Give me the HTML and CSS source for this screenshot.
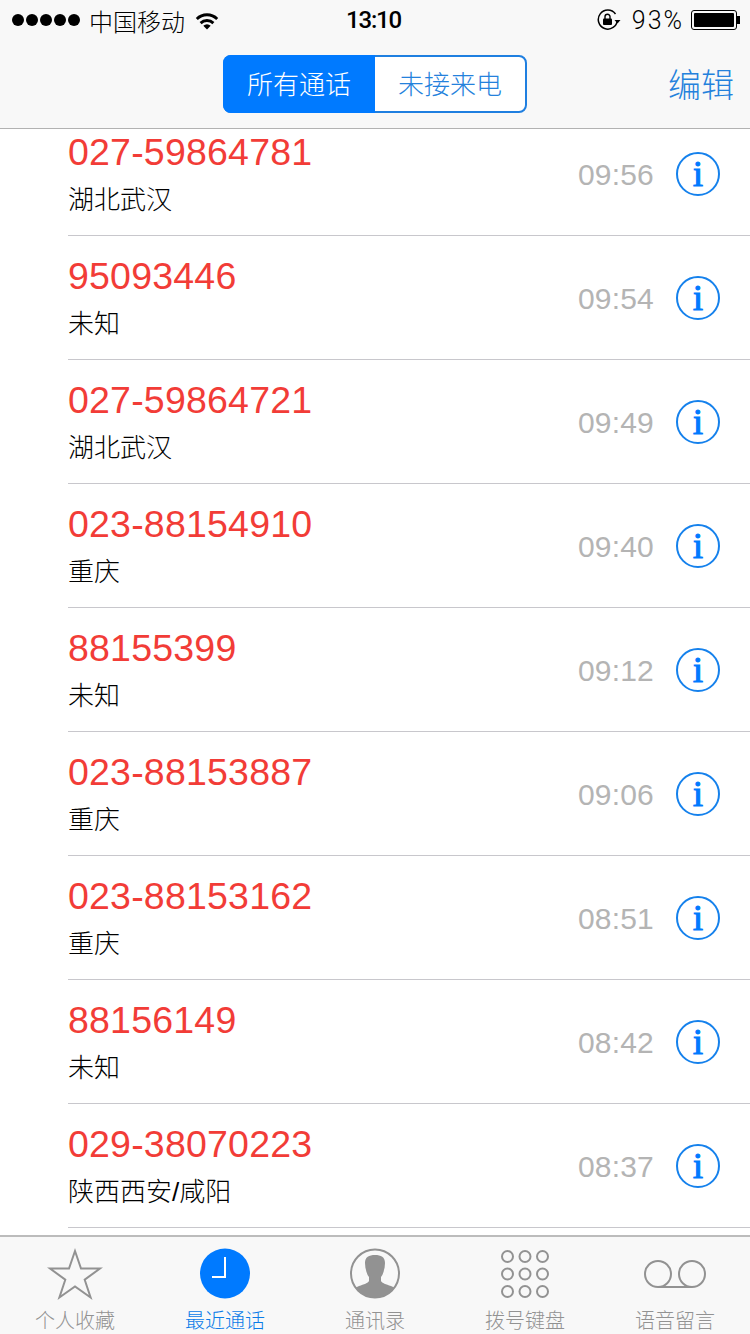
FILE: index.html
```html
<!DOCTYPE html>
<html lang="zh-CN">

<head>
    <title>最近通话</title>
    <meta charset="UTF-8" />
    <meta name="viewport" content="width=device-width, initial-scale=1.0" />
    <link rel="stylesheet" href="styles.css">
</head>

<body>
    <header class="top">
        <div class="status">
            <div class="status-left">
                <span class="signal"><i></i><i></i><i></i><i></i><i></i></span>
                <span class="carrier">中国移动</span>
                <svg class="wifi" width="24" height="19" viewBox="0 0 24 19">
                    <path d="M.8 6.900a16 16 0 0 1 22.400 0l-2 2.200a13 13 0 0 0-18.400 0z" fill="#000" />
                    <path d="M4.600 11a10.500 10.500 0 0 1 14.800 0l-2 2.200a7.600 7.600 0 0 0-10.800 0z" fill="#000" />
                    <path d="M12 18.500 8.300 14.800a5.300 5.300 0 0 1 7.400 0z" fill="#000" />
                </svg>
            </div>
            <div class="clock">13:10</div>
            <div class="status-right">
                <svg class="lock" width="24" height="22" viewBox="0 0 24 22">
                    <path d="M18.500 5A9.500 9.500 0 1 0 20.300 11" fill="none" stroke="#000" stroke-width="1.500" />
                    <path d="M17.500 11h6l-3 3.500z" fill="#000" />
                    <rect x="6" y="9.500" width="9" height="6.500" rx="1" fill="#000" />
                    <path d="M8 10V7.800a2.500 2.500 0 0 1 5 0V10" fill="none" stroke="#000" stroke-width="1.400" />
                </svg>
                <span class="percent">93%</span>
                <span class="battery"><span class="battery-fill"></span></span>
            </div>
        </div>
        <nav class="nav">
            <div class="segments">
                <span class="segment active">所有通话</span>
                <span class="segment">未接来电</span>
            </div>
            <span class="edit">编辑</span>
        </nav>
    </header>

    <main class="calls">
        <ul class="call-list">
            <li class="call">
                <div class="call-body">
                    <div class="call-text"><div class="number">027-59864781</div><div class="place">湖北武汉</div></div>
                    <span class="time">09:56</span>
                    <span class="info">i</span>
                </div>
            </li>
            <li class="call">
                <div class="call-body">
                    <div class="call-text"><div class="number">95093446</div><div class="place">未知</div></div>
                    <span class="time">09:54</span>
                    <span class="info">i</span>
                </div>
            </li>
            <li class="call">
                <div class="call-body">
                    <div class="call-text"><div class="number">027-59864721</div><div class="place">湖北武汉</div></div>
                    <span class="time">09:49</span>
                    <span class="info">i</span>
                </div>
            </li>
            <li class="call">
                <div class="call-body">
                    <div class="call-text"><div class="number">023-88154910</div><div class="place">重庆</div></div>
                    <span class="time">09:40</span>
                    <span class="info">i</span>
                </div>
            </li>
            <li class="call">
                <div class="call-body">
                    <div class="call-text"><div class="number">88155399</div><div class="place">未知</div></div>
                    <span class="time">09:12</span>
                    <span class="info">i</span>
                </div>
            </li>
            <li class="call">
                <div class="call-body">
                    <div class="call-text"><div class="number">023-88153887</div><div class="place">重庆</div></div>
                    <span class="time">09:06</span>
                    <span class="info">i</span>
                </div>
            </li>
            <li class="call">
                <div class="call-body">
                    <div class="call-text"><div class="number">023-88153162</div><div class="place">重庆</div></div>
                    <span class="time">08:51</span>
                    <span class="info">i</span>
                </div>
            </li>
            <li class="call">
                <div class="call-body">
                    <div class="call-text"><div class="number">88156149</div><div class="place">未知</div></div>
                    <span class="time">08:42</span>
                    <span class="info">i</span>
                </div>
            </li>
            <li class="call">
                <div class="call-body">
                    <div class="call-text"><div class="number">029-38070223</div><div class="place">陕西西安/咸阳</div></div>
                    <span class="time">08:37</span>
                    <span class="info">i</span>
                </div>
            </li>
        </ul>
    </main>

    <footer class="tabs">
        <div class="tab">
            <svg class="tab-icon" width="56" height="54" viewBox="0 0 56 54">
                <path d="M28 4l6 17.500h19L37.700 32.700l5.900 17.800L28 39.500 12.400 50.500l5.900-17.800L3 21.500h19z" fill="none" stroke="#929292" stroke-width="2" />
            </svg>
            <span>个人收藏</span>
        </div>
        <div class="tab current">
            <svg class="tab-icon" width="56" height="54" viewBox="0 0 56 54">
                <circle cx="28" cy="26.500" r="25" fill="#007aff" />
                <path d="M28 10v20H15" fill="none" stroke="#fff" stroke-width="2" />
            </svg>
            <span>最近通话</span>
        </div>
        <div class="tab">
            <svg class="tab-icon" width="56" height="54" viewBox="0 0 56 54">
                <defs><clipPath id="face"><circle cx="28" cy="26.500" r="24" /></clipPath></defs>
                <circle cx="28" cy="26.500" r="24" fill="none" stroke="#929292" stroke-width="2" />
                <path clip-path="url(#face)" d="M28 8c-6 0-10 2-10 8 0 3 .5 6 1.500 9 .7 2 1.500 4 2.500 5v4c-1 2-5 3.500-10 5-3 1-5 3-6 5v10h44V44c-1-2-3-4-6-5-5-1.500-9-3-10-5v-4c1-1 1.800-3 2.500-5 1-3 1.500-6 1.500-9 0-6-4-8-10-8z" fill="#929292" />
            </svg>
            <span>通讯录</span>
        </div>
        <div class="tab">
            <svg class="tab-icon" width="56" height="54" viewBox="0 0 56 54">
                <g fill="none" stroke="#929292" stroke-width="2">
                    <circle cx="10.500" cy="9.500" r="5.500" /><circle cx="28" cy="9.500" r="5.500" /><circle cx="45.500" cy="9.500" r="5.500" />
                    <circle cx="10.500" cy="27" r="5.500" /><circle cx="28" cy="27" r="5.500" /><circle cx="45.500" cy="27" r="5.500" />
                    <circle cx="10.500" cy="44.500" r="5.500" /><circle cx="28" cy="44.500" r="5.500" /><circle cx="45.500" cy="44.500" r="5.500" />
                </g>
            </svg>
            <span>拨号键盘</span>
        </div>
        <div class="tab">
            <svg class="tab-icon" width="64" height="54" viewBox="0 0 64 54">
                <g fill="none" stroke="#929292" stroke-width="2">
                    <circle cx="15" cy="27" r="13" /><circle cx="49" cy="27" r="13" />
                    <path d="M15 40h34" />
                </g>
            </svg>
            <span>语音留言</span>
        </div>
    </footer>
</body>

</html>
```
FILE: styles.css
```css
* {
    box-sizing: border-box;
}

html,
body {
    margin: 0;
    height: 100%;
}

body {
    width: 750px;
    height: 1334px;
    display: flex;
    flex-direction: column;
    overflow: hidden;
    background-color: #fff;
    font-family: "Liberation Sans", "Noto Sans CJK SC", sans-serif;
}

/* header */
.top {
    height: 129px;
    flex: none;
    background-color: #f8f8f8;
    border-bottom: 1px solid #b2b2b2;
}

.status {
    height: 40px;
    padding: 0 9px 0 12px;
    display: grid;
    grid-template-columns: 334px auto 1fr;
    align-items: center;
    color: #000;
    font-family: Roboto, "Noto Sans CJK SC", sans-serif;
}

.status-left {
    display: flex;
    align-items: center;
}

.signal {
    display: flex;
    gap: 2px;
}

.signal i {
    width: 12px;
    height: 12px;
    border-radius: 50%;
    background-color: #000;
}

.carrier {
    margin-left: 9px;
    font-size: 24px;
    font-weight: 300;
}

.wifi {
    margin-left: 10px;
}

.clock {
    font-size: 24px;
    font-weight: 500;
    letter-spacing: -1.200px;
}

.status-right {
    display: flex;
    align-items: center;
    justify-content: flex-end;
}

.percent {
    margin-left: 11px;
    font-size: 25px;
    font-weight: 300;
    letter-spacing: 2px;
}

.battery {
    position: relative;
    width: 46px;
    height: 20px;
    margin: 0 4px 0 7px;
    padding: 2px;
    display: flex;
    border: 1px solid #000;
    border-radius: 3px;
}

.battery::after {
    content: "";
    position: absolute;
    left: 45px;
    top: 5px;
    width: 3px;
    height: 8px;
    background-color: #000;
}

.battery-fill {
    flex: 1;
    background-color: #000;
    border-radius: 1px;
}

.nav {
    height: 88px;
    padding-right: 16px;
    display: grid;
    grid-template-columns: 223px 304px 1fr;
    align-items: center;
}

.segments {
    grid-column: 2;
    height: 58px;
    display: flex;
    background-color: #fff;
    border: 2px solid #1f7fe0;
    border-radius: 8px;
}

.segment {
    flex: 1;
    display: flex;
    align-items: center;
    justify-content: center;
    padding-bottom: 4px;
    color: #2481dc;
    font-size: 26px;
    font-weight: 300;
}

.segment.active {
    flex: none;
    width: 152px;
    margin: -2px 0 -2px -2px;
    background-color: #007aff;
    border-radius: 8px 0 0 8px;
    color: #fff;
}

.edit {
    justify-self: end;
    margin-top: -3px;
    color: #2481dc;
    font-size: 33px;
    font-weight: 300;
}

/* call list */
.calls {
    flex: 1;
    min-height: 0;
    overflow: hidden;
}

.call-list {
    list-style: none;
    margin: -17px 0 0 0;
    padding: 0;
}

.call {
    height: 124px;
    padding-left: 68px;
}

.call-body {
    height: 100%;
    padding-right: 30px;
    display: flex;
    align-items: center;
    border-bottom: 1px solid #c8c7cc;
}

.call-text {
    flex: 1;
    min-width: 0;
}

.number {
    color: #f23c37;
    font-size: 37.500px;
    letter-spacing: 0.200px;
    line-height: 46px;
}

.place {
    margin-top: 7px;
    color: #000;
    font-size: 26px;
    font-weight: 300;
    line-height: 36px;
}

.time {
    margin-top: 2px;
    color: #b4b4b4;
    font-size: 30px;
    letter-spacing: 0.200px;
}

.info {
    width: 44px;
    height: 44px;
    margin-left: 22px;
    display: flex;
    align-items: center;
    justify-content: center;
    border: 2px solid #1581ec;
    border-radius: 50%;
    color: #007aff;
    font-family: "Liberation Serif", serif;
    font-size: 36px;
    -webkit-text-stroke: 1.200px #007aff;
}

/* tab bar */
.tabs {
    height: 99px;
    flex: none;
    padding-top: 10px;
    display: grid;
    grid-template-columns: repeat(5, 150px);
    background-color: #f8f8f8;
    border-top: 2px solid #bcbcbc;
}

.tab {
    display: flex;
    flex-direction: column;
    align-items: center;
    color: #929292;
    font-size: 20px;
    font-weight: 300;
    line-height: 26px;
}

.tab.current {
    color: #0a7ce8;
}

.tab-icon {
    flex: none;
    margin-bottom: 7px;
}
```
